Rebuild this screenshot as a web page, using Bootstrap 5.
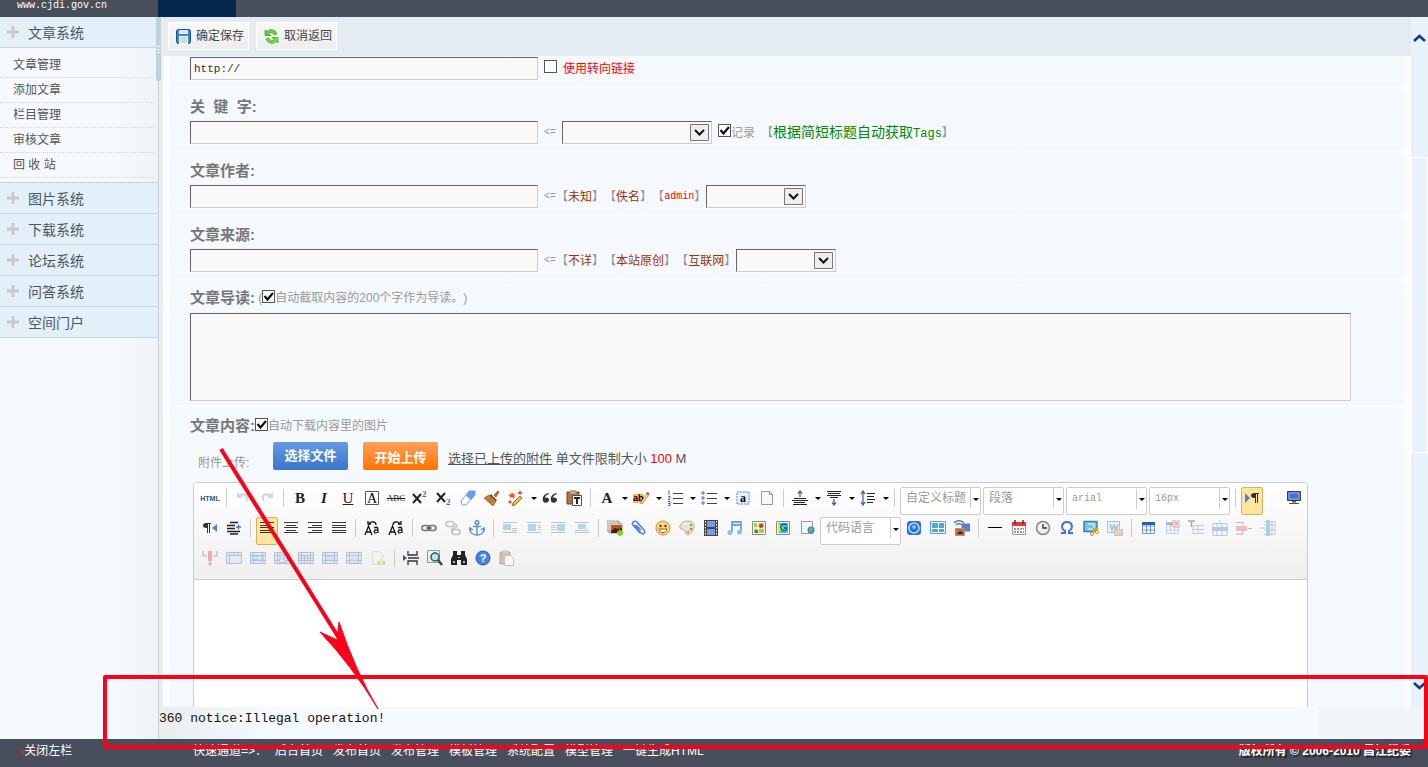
<!DOCTYPE html>
<html lang="zh-CN">
<head>
<meta charset="utf-8">
<meta name="viewport" content="width=device-width, initial-scale=1">
<title>文章系统</title>
<link href="https://cdn.jsdelivr.net/npm/bootstrap@5.3.0/dist/css/bootstrap.min.css" rel="stylesheet">
<style>
body{font-family:"Liberation Sans","Noto Sans CJK SC",sans-serif;font-size:12px;line-height:18px;color:#555;background:#f4f8fd;text-spacing-trim:space-all}
a{color:inherit;text-decoration:none}
.mono{font-family:"Liberation Mono","Noto Sans CJK SC",monospace;font-size:10px}
.topbar{height:17px;background:#484e5c;color:#fff}
.site-name{width:158px;padding-left:17px;line-height:12px}
.top-tab{width:78px;background:#04284d}
.side{width:159px;background:linear-gradient(90deg,#f5f9fe 75%,#edf3f6);border-right:1px solid #c8d2d8}
.side-head{height:31px;padding:2px 0 0 7px;gap:9px;background:#e3f0fa;border-bottom:1px solid #c8d5dc;font-size:14px;color:#49565f}
.side-head svg{margin-bottom:2px}
.side-list{padding:5px 4px 4px 0;border-bottom:1px solid #c8d5dc}
.side-list a{height:25px;line-height:25px;padding-left:13px;border-bottom:1px dotted #ccd5da}
.split-thumb{left:156px;top:0;width:5px;height:64px;background:#bdd3d8;border-radius:2px}
.gutter{border-left:4px solid #e9eeef;background:#fcfdfe}
.actions{height:39px;padding:5px 5px 0;gap:7px;background:#e4ecf2}
.act{width:81px;height:28px;padding:0 4px 0 0;gap:5px;border:1px solid #fff;border-radius:0;background:linear-gradient(#f8f8f8,#ededed);font-size:12px;color:#444}
.form-area{padding:0 7px}
.block{background:linear-gradient(#f4f9fc,#f5f8fe);padding:6px 20px 7px;margin-bottom:2px;color:#999}
.block.first{padding-top:1px}
.cap{font-size:15px;font-weight:700;line-height:24px;color:#777}
.cap-row{height:22px;margin-bottom:4px}
.box{border:1px solid #ccc;border-top-color:#666;border-left-color:#666;background:#f9f9f9;border-radius:0;outline:0}
input.box{width:348px;height:23px;padding:0 3px;font:11px "Liberation Mono",monospace;color:#333}
textarea.box{display:block;width:calc(100% - 33px);height:88px;resize:none}
select.box{width:100px;height:23px;appearance:none;background:#f9f9f9 url("data:image/svg+xml,%3Csvg xmlns='http://www.w3.org/2000/svg' width='19' height='17'%3E%3Cpath d='M.5 .5h18v16H.5z' fill='%23eee' stroke='%23777'/%3E%3Cpath d='M5 6l4.500 4.500L14 6' fill='none' stroke='%23111' stroke-width='2'/%3E%3C/svg%3E") no-repeat right 2px center}
select.wide{width:150px;margin-left:6px}
.tick{appearance:none;width:13px;height:13px;margin:0 0 4px;border:1px solid #555;background:#fff}
.tick:checked{background:#fff url("data:image/svg+xml,%3Csvg xmlns='http://www.w3.org/2000/svg' width='11' height='11'%3E%3Cpath d='M1.500 5l3 3.500L10 2' fill='none' stroke='%23111' stroke-width='2.200'/%3E%3C/svg%3E") center no-repeat}
.gap-s{margin-left:6px}
.gap-e{margin-right:6px}
.red{color:#f00}
.brown{color:#930}
.green{font-size:14px;color:#080}
.green .mono{font-size:12px}
.upload{height:28px;margin:7px 0 12px}
.up-btn{width:75px;height:28px;padding:0;border:0;border-radius:2px;color:#fff;font-size:13px;font-weight:700;line-height:28px;flex:none}
.up-blue{margin-right:15px;background:linear-gradient(#6699e0,#3b76cc)}
.up-orange{margin-right:10px;background:linear-gradient(#ffa05c,#ff7200);line-height:32px}
.up-label{width:83px;padding:12px 0 0 8px;flex:none}
.up-text{font-size:13px;color:#555;padding-top:8px}
.editor{margin:0 76px 0 3px;border:1px solid #ccc;border-radius:4px 4px 0 0;background:#fff}
.tools{padding:4px 0 2px 5px;border-bottom:1px solid #ccc;border-radius:4px 4px 0 0;background:linear-gradient(#fff,#efefef)}
.tool-row{height:30px}
.tb{width:22px;height:22px;padding:0;margin-right:2px;border:0;background:none;flex:none;display:flex;align-items:center;justify-content:center;font-family:"Liberation Serif",serif;font-size:15px;line-height:22px;color:#222}
.tb svg{width:16px;height:16px}
.tb.on{height:28px;padding-bottom:6px;background:#ffe69f;border:1px solid #dcac6c;border-radius:2px}
.tb.off{opacity:.4}
.drop{width:10px;height:22px;flex:none;padding:0;border:0;background:none;display:flex;align-items:center;justify-content:center}
.drop::after,.pick::after{content:"";border:3px solid transparent;border-top-color:#000;border-bottom:0}
.sep{width:9px;height:18px;margin-top:2px;flex:none;background:linear-gradient(#ccc,#ccc) 3px 0/1px 100% no-repeat}
.pick{position:relative;width:81px;height:28px;margin-right:2px;border:1px solid #ccc;border-radius:2px;background:#fff;flex:none}
.pick::after{position:absolute;right:1px;top:10px}
.pick select{width:100%;height:20px;padding:0 5px;border:0;appearance:none;color:#999;font-size:12px;background:linear-gradient(#ccc,#ccc) right 9px top/1px 100% no-repeat}
.pick select.mono{font-size:10px}
.html-tag{font:bold 7px "Liberation Sans",sans-serif;color:#235b83}
.abc{font-size:9px;text-decoration:line-through}
.page{height:200px}
.scroller{width:17px;background:#e9f1fb}
.scroller svg{margin:16px 2px}
.up-gap{height:99px}
.thumb{height:296px;border:1px solid #fff}
.notice{height:32px;background:linear-gradient(90deg,#e9eded,#f4fafd 110px);color:#111;font-size:13px;line-height:24px}
.notice-text{font-family:"Liberation Mono",monospace;font-size:13px}
.notice-end{width:110px;background:#f2f5fa}
.foot{height:28px;padding:0 17px 4px 19px;background:#484e5c;color:#fff}
.foot-left{width:174px}
.foot-mark{font-size:9px;color:#f02030}
.foot-nav{gap:10px}
.foot-title{width:72px}
.copy{font-weight:700;text-shadow:2px 2px 1px #222}
.frame-mark{left:103px;right:0;bottom:18px;height:74px;border:4px solid #f9031a;border-radius:2px;pointer-events:none}
.arrow-mark{left:215px;top:445px;width:170px;height:270px;pointer-events:none}
</style>
<script src="https://cdn.jsdelivr.net/npm/bootstrap@5.3.0/dist/js/bootstrap.bundle.min.js"></script>
</head>
<body class="vh-100 d-flex flex-column overflow-hidden position-relative">
<svg class="d-none" aria-hidden="true">
<symbol id="plus" viewBox="0 0 13 13"><path d="M5 0h3v5h5v3H8v5H5V8H0V5h5z" fill="#c8c8c8"/></symbol>
<symbol id="grid" viewBox="0 0 16 16"><path d="M2.500 2.500h12v11h-12zM2.500 6h12M2.500 10h12M6.500 2.500v11M10.500 2.500v11" fill="#f4f8fd" stroke="#7a9bc8"/><path d="M2 2h13v3H2z" fill="#2e5fae"/></symbol>
<symbol id="cells" viewBox="0 0 16 16"><path d="M.5 2.500h15v11H.5zM0 5.500h16M0 10.500h16M3.500 2v12M12.500 2v12" fill="#cfe0f8" stroke="#5577a8"/></symbol>
</svg>
<header class="topbar d-flex flex-shrink-0"><div class="site-name mono">www.cjdi.gov.cn</div><div class="top-tab"></div></header>

<div class="d-flex flex-grow-1 position-relative overflow-hidden">
<nav class="side flex-shrink-0">
<a href="#" class="side-head d-flex align-items-center"><svg width="12" height="12"><use href="#plus"/></svg>文章系统</a>
<div class="side-list d-flex flex-column"><a href="#">文章管理</a><a href="#">添加文章</a><a href="#">栏目管理</a><a href="#">审核文章</a><a href="#">回 收 站</a></div>
<a href="#" class="side-head d-flex align-items-center"><svg width="12" height="12"><use href="#plus"/></svg>图片系统</a>
<a href="#" class="side-head d-flex align-items-center"><svg width="12" height="12"><use href="#plus"/></svg>下载系统</a>
<a href="#" class="side-head d-flex align-items-center"><svg width="12" height="12"><use href="#plus"/></svg>论坛系统</a>
<a href="#" class="side-head d-flex align-items-center"><svg width="12" height="12"><use href="#plus"/></svg>问答系统</a>
<a href="#" class="side-head d-flex align-items-center"><svg width="12" height="12"><use href="#plus"/></svg>空间门户</a>
</nav>
<div class="split-thumb position-absolute d-flex align-items-center"><svg width="5" height="9" viewBox="0 0 5 9"><path d="M1 1.500h3M1 4.500h3M1 7.500h3" stroke="#fff"/></svg></div>

<div class="d-flex flex-column flex-grow-1 overflow-hidden">
<div class="d-flex flex-grow-1 overflow-hidden">
<main class="gutter flex-grow-1 overflow-hidden">
<div class="actions d-flex">
<button class="act d-flex align-items-center justify-content-end" type="button"><svg width="15" height="15" viewBox="0 0 15 15"><rect x=".5" y=".5" width="14" height="14" rx="2" fill="#3c86cf" stroke="#1d4c86"/><path d="M3 1h9v4H3z" fill="#d9eefc"/><path d="M3 7h9v8H3z" fill="#fff"/><path d="M4 9h7M4 11h7M4 13h7" stroke="#93b9dd"/></svg>确定保存</button>
<button class="act d-flex align-items-center justify-content-end" type="button"><svg width="15" height="15" viewBox="0 0 15 15"><path d="M1 1l2 1.500C6-.5 11 0 13 5l-3 1C9 3 6 3 5 4.500L7 6.500H1z" fill="#67cf35" stroke="#339b2b" stroke-width=".7"/><path d="M14 14l-2-1.500C9 15.500 4 15 2 10l3-1c1 3 4 3 5 1.500L8 8.500h6z" fill="#7bdc4a" stroke="#339b2b" stroke-width=".7"/></svg>取消返回</button>
</div>
<form class="form-area">
<div class="block first d-flex align-items-center"><input class="box" id="link" value="http://" aria-label="转向链接"><input type="checkbox" class="tick gap-s" id="useLink"><label for="useLink" class="red gap-s">使用转向链接</label></div>

<div class="block"><div class="cap-row"><label class="cap" for="kw">关 &nbsp;键 &nbsp;字:</label></div>
<div class="d-flex align-items-center"><input class="box" id="kw"><span class="mono gap-s">&lt;=</span><select class="box wide" aria-label="关键字"><option></option></select><input type="checkbox" class="tick gap-s" id="rec" checked><label for="rec" class="gap-e">记录</label>【<a href="#" class="green">根据简短标题自动获取<span class="mono">Tags</span></a>】</div></div>

<div class="block"><div class="cap-row"><label class="cap" for="author">文章作者:</label></div>
<div class="d-flex align-items-center"><input class="box" id="author"><span class="mono gap-s">&lt;=</span><span>【</span><a href="#" class="brown">未知</a><span>】</span><span>【</span><a href="#" class="brown">佚名</a><span>】</span><span>【</span><a href="#" class="mono red">admin</a><span>】</span><select class="box" aria-label="作者"><option></option></select></div></div>

<div class="block"><div class="cap-row"><label class="cap" for="src">文章来源:</label></div>
<div class="d-flex align-items-center"><input class="box" id="src"><span class="mono gap-s">&lt;=</span><span>【</span><a href="#" class="brown">不详</a><span>】</span><span>【</span><a href="#" class="brown">本站原创</a><span>】</span><span>【</span><a href="#" class="brown">互联网</a><span>】</span><select class="box" aria-label="来源"><option></option></select></div></div>

<div class="block pb-1"><div class="cap-row d-flex align-items-center"><label class="cap" for="intro">文章导读:</label><span>&nbsp;(</span><input type="checkbox" class="tick" id="cut" checked><label for="cut">自动截取内容的200个字作为导读。)</label></div>
<textarea class="box" id="intro"></textarea></div>

<div class="block"><div class="cap-row d-flex align-items-center pt-1"><span class="cap">文章内容:</span><input type="checkbox" class="tick" id="dl" checked><label for="dl">自动下载内容里的图片</label></div>
<div class="upload d-flex"><span class="up-label">附件上传:</span><button type="button" class="up-btn up-blue">选择文件</button><button type="button" class="up-btn up-orange">开始上传</button><div class="up-text"><a href="#" class="text-decoration-underline">选择已上传的附件</a> 单文件限制大小 <span class="red">100</span> M</div></div>

<div class="editor">
<div class="tools">
<div class="tool-row d-flex">
<button type="button" class="tb"><span class="html-tag">HTML</span></button><span class="sep"></span>
<button type="button" class="tb off" title="撤销"><svg viewBox="0 0 16 16"><path d="M2 2v6h6L6 6c4-2 7 1 4 7 6-5 4-12-6-9z" fill="#7aa7dc"/></svg></button>
<button type="button" class="tb off" title="重做"><svg viewBox="0 0 16 16"><path d="M14 2v6H8l2-2c-4-2-7 1-4 7C0 8 2 1 12 4z" fill="#7aa7dc"/></svg></button><span class="sep"></span>
<button type="button" class="tb"><b>B</b></button>
<button type="button" class="tb"><b><i>I</i></b></button>
<button type="button" class="tb"><u>U</u></button>
<button type="button" class="tb" title="字符边框"><svg viewBox="0 0 16 16"><path d="M1.500 1.500h13v13h-13z" fill="none" stroke="#555"/><text x="8" y="13" font-size="14" text-anchor="middle">A</text></svg></button>
<button type="button" class="tb"><span class="abc">ABC</span></button>
<button type="button" class="tb" title="上标"><svg viewBox="0 0 16 16"><path d="M1 4l8 9M9 4l-8 9" stroke="#222" stroke-width="2"/><text x="10" y="7" font-size="9" font-weight="700" fill="#3566c8">2</text></svg></button>
<button type="button" class="tb" title="下标"><svg viewBox="0 0 16 16"><path d="M1 3l8 9M9 3l-8 9" stroke="#222" stroke-width="2"/><text x="10" y="15" font-size="9" font-weight="700" fill="#3566c8">2</text></svg></button>
<button type="button" class="tb" title="清除格式"><svg viewBox="0 0 16 16"><path d="M1 11L9 1h6v4l-9 10H2z" fill="#fff" stroke="#7c9cc6"/><path d="M6 6l3-5h6v4l-4 5z" fill="#6b9ee5"/></svg></button>
<button type="button" class="tb" title="格式刷"><svg viewBox="0 0 16 16"><path d="M10 5l4-4 1 1-3 5z" fill="#b86e2a" stroke="#6d3a0d" stroke-width=".6"/><path d="M7 4l6 6-2 2-6-6z" fill="#8a4e1e"/><path d="M5 5l7 6-3 5-9-8z" fill="#c98740" stroke="#8a4e1e" stroke-width=".7"/><path d="M3 8l4 5M5 7l4 5" stroke="#8a4e1e" stroke-width=".6"/></svg></button>
<button type="button" class="tb" title="自动排版"><svg viewBox="0 0 16 16"><path d="M5 13l7-7 2 2-7 7-3 1z" fill="#f2bd4a" stroke="#a66d28"/><path d="M4 2l1 2 2-1-1 2 2 1-2 1v2L4 7 2 8V6L0 5l3-1zM12 0l1 2 2 1-2 1-1 1-1-1-2-1 2-1zM2 10l1 1 1 1-1 1-1 1-1-1-1-1 1-1z" fill="#e25b35"/></svg></button><button type="button" class="drop" aria-label="更多"></button>
<button type="button" class="tb" title="引用"><svg viewBox="0 0 16 16"><path d="M6.500 3C2 4 0 7 1 11c1 3 6 2 6-1 0-2-2-3-4-2 0-2 1-3 4-4zM14.500 3C10 4 8 7 9 11c1 3 6 2 6-1 0-2-2-3-4-2 0-2 1-3 4-4z" fill="#333"/></svg></button>
<button type="button" class="tb" title="纯文本粘贴"><svg viewBox="0 0 16 16"><path d="M1 2h12v12H1z" fill="#b4713c" stroke="#76431b"/><path d="M4 0h6v4H4z" fill="#aaa"/><path d="M6.500 5.500h9v10h-9z" fill="#fff" stroke="#456"/><path d="M8 8h6M11 8v6" stroke="#222" stroke-width="2"/></svg></button><span class="sep"></span>
<button type="button" class="tb"><b>A</b></button><button type="button" class="drop" aria-label="更多"></button>
<button type="button" class="tb" title="背景色"><svg viewBox="0 0 16 16"><path d="M0 4h11v9H0z" fill="#f7b55e"/><text x="0" y="11" font-size="9" font-weight="700" font-family="Liberation Sans">ab</text><path d="M7 13l7-9 2 1-7 9z" fill="#f5d88d" stroke="#a45a2c" stroke-width=".6"/><path d="M13 4l1-2 2 1v2z" fill="#e33"/></svg></button><button type="button" class="drop" aria-label="更多"></button>
<button type="button" class="tb" title="有序列表"><svg viewBox="0 0 16 16"><path d="M6 3.500h10M6 8.500h10M6 13.500h10" stroke="#444"/><path d="M1 1h1v4M1 6.500h2v1.500l-2 1.500h2M1 11.500h2v4H1M1 13.500h2" fill="none" stroke="#3b74d5"/></svg></button><button type="button" class="drop" aria-label="更多"></button>
<button type="button" class="tb" title="无序列表"><svg viewBox="0 0 16 16"><path d="M6 3.500h10M6 8.500h10M6 13.500h10" stroke="#444"/><g fill="#fff" stroke="#3b5fd5"><circle cx="2" cy="3" r="1.200"/><circle cx="2" cy="8" r="1.200"/><circle cx="2" cy="13" r="1.200"/></g></svg></button><button type="button" class="drop" aria-label="更多"></button>
<button type="button" class="tb" title="全选"><svg viewBox="0 0 16 16"><rect x="2" y="2" width="12" height="12" fill="#e8f2fc" stroke="#9cc1ec" stroke-width="2" stroke-dasharray="2 1"/><text x="8" y="12" text-anchor="middle" font-size="12" font-weight="700">a</text></svg></button>
<button type="button" class="tb" title="清空"><svg viewBox="0 0 16 16"><path d="M2.500 1.500h8l3 3v10h-11z" fill="#f8f9fa" stroke="#999"/><path d="M10.500 1.500v3h3" fill="none" stroke="#999"/></svg></button><span class="sep"></span>
<button type="button" class="tb" title="段前距"><svg viewBox="0 0 16 16"><path d="M2 8.500h12M0 10.500h16M2 12.500h11M1 14.500h14" stroke="#222"/><path d="M8 7V2M6 3.500L8 1l2 2.500" fill="none" stroke="#3b65b5" stroke-width="1.300"/></svg></button><button type="button" class="drop" aria-label="更多"></button>
<button type="button" class="tb" title="段后距"><svg viewBox="0 0 16 16"><path d="M1 1.500h14M2 3.500h12M1 5.500h14M4 7.500h8" stroke="#222"/><path d="M8 9v5M6 12.500L8 15l2-2.500" fill="none" stroke="#3b65b5" stroke-width="1.300"/></svg></button><button type="button" class="drop" aria-label="更多"></button>
<button type="button" class="tb" title="行间距"><svg viewBox="0 0 16 16"><path d="M7 3.500h8M7 6.500h7M7 9.500h8M7 12.500h6" stroke="#222"/><path d="M3 1v14M1 4l2-3 2 3M1 12l2 3 2-3" fill="none" stroke="#3b65b5" stroke-width="1.300"/></svg></button><button type="button" class="drop" aria-label="更多"></button><span class="sep"></span>
<div class="pick"><select aria-label="标题"><option>自定义标题</option></select></div>
<div class="pick"><select aria-label="段落"><option>段落</option></select></div>
<div class="pick"><select class="mono" aria-label="字体"><option>arial</option></select></div>
<div class="pick"><select class="mono" aria-label="字号"><option>16px</option></select></div>
<span class="sep"></span>
<button type="button" class="tb on me-3" title="从左向右"><svg viewBox="0 0 16 16"><path d="M1 3l5 5-5 5z" fill="#4f80db"/><path d="M10 8C6 8 6 3 10 3h5v1h-1v9h-1V4h-1v9h-1V8z" fill="#333"/></svg></button>
<button type="button" class="tb ms-1" title="全屏"><svg viewBox="0 0 16 16"><path d="M1.500 1.500h13v9h-13z" fill="#4970cf" stroke="#3c4150"/><path d="M3 3h10v6H3z" fill="#4970cf" stroke="#c9d8fa" stroke-width=".6"/><path d="M6 11h4v1.500H6zM3 13h10v1H3z" fill="#555"/></svg></button>
</div>
<div class="tool-row d-flex">
<button type="button" class="tb" title="从右向左"><svg viewBox="0 0 16 16"><path d="M15 4v8l-5-4z" fill="#4f80db"/><path d="M4 8C0 8 0 3 4 3h5v1H8v9H7V4H6v9H5V8z" fill="#333"/></svg></button>
<button type="button" class="tb" title="首行缩进"><svg viewBox="0 0 16 16"><path d="M4 2.500h8M1 5.500h8M1 8.500h8M1 11.500h13M4 14h8" stroke="#222" stroke-width="1.500"/><path d="M10 7h5M12.500 4.500v5" stroke="#4878d8" stroke-width="1.500"/></svg></button><span class="sep"></span>
<button type="button" class="tb on" title="居左"><svg viewBox="0 0 16 16"><path d="M1 2.500h14M1 5.500h10M1 7.500h14M1 10.500h10M1 12.500h14" stroke="#333"/></svg></button>
<button type="button" class="tb" title="居中"><svg viewBox="0 0 16 16"><path d="M1 2.500h14M3 5.500h10M1 7.500h14M3 10.500h10M1 12.500h14" stroke="#333"/></svg></button>
<button type="button" class="tb" title="居右"><svg viewBox="0 0 16 16"><path d="M1 2.500h14M5 5.500h10M1 7.500h14M5 10.500h10M1 12.500h14" stroke="#333"/></svg></button>
<button type="button" class="tb" title="两端对齐"><svg viewBox="0 0 16 16"><path d="M1 2.500h14M1 5.500h14M1 7.500h14M1 10.500h14M1 12.500h14" stroke="#333"/></svg></button><span class="sep"></span>
<button type="button" class="tb" title="大写"><svg viewBox="0 0 16 16"><path d="M1 15l3.500-9L8 15M2 12h5M10 8c4-2 4 0 4 5M14 10c-5-1-5 4-1 2.500" fill="none" stroke="#111" stroke-width="1.300"/><path d="M12 5c0-4-6-4-7-1M4 1v3h3" fill="none" stroke="#111" stroke-width="1.300"/></svg></button>
<button type="button" class="tb" title="小写"><svg viewBox="0 0 16 16"><path d="M1 15l3.500-9L8 15M2 12h5M10 8c4-2 4 0 4 5M14 10c-5-1-5 4-1 2.500" fill="none" stroke="#111" stroke-width="1.300"/><path d="M5 5c0-4 6-4 7-1M13 1v3h-3" fill="none" stroke="#111" stroke-width="1.300"/></svg></button><span class="sep"></span>
<button type="button" class="tb" title="超链接"><svg viewBox="0 0 16 16"><g fill="none" stroke="#777" stroke-width="1.600"><rect x="1" y="5.500" width="8" height="5" rx="2.500"/><rect x="7" y="5.500" width="8" height="5" rx="2.500"/></g><path d="M5 8h6" stroke="#444"/></svg></button>
<button type="button" class="tb off" title="取消链接"><svg viewBox="0 0 16 16"><g fill="none" stroke="#777" stroke-width="1.600"><rect x="1" y="1.500" width="8" height="5" rx="2.500"/><rect x="7" y="9.500" width="8" height="5" rx="2.500"/><path d="M9 4c4 0 3 4 0 4s-3 3-1 4"/></g></svg></button>
<button type="button" class="tb" title="锚点"><svg viewBox="0 0 16 16"><g fill="none" stroke="#5d93c9" stroke-width="1.500"><circle cx="8" cy="2.500" r="1.800"/><path d="M8 4v11M4 6.500h8M1 9c0 8 14 8 14 0M0 11l1-3 3 2M16 11l-1-3-3 2"/></g></svg></button><span class="sep"></span>
<button type="button" class="tb off" title="左浮动"><svg viewBox="0 0 16 16"><path d="M1 2.500h14M10 8.500h5M10 10.500h5M1 12.500h14" stroke="#777"/><path d="M1 4h8v6H1z" fill="#4aa7e0"/></svg></button>
<button type="button" class="tb off" title="右浮动"><svg viewBox="0 0 16 16"><path d="M1 2.500h14M12 5.500h3M12 7.500h3M12 9.500h3M1 12.500h14" stroke="#777"/><path d="M2 4h8v7H2z" fill="#4aa7e0"/></svg></button>
<button type="button" class="tb off" title="默认"><svg viewBox="0 0 16 16"><path d="M1 2.500h14M1 5.500h5M1 7.500h5M1 9.500h5M1 12.500h14" stroke="#777"/><path d="M7 4h8v7H7z" fill="#4aa7e0"/></svg></button>
<button type="button" class="tb off" title="居中图片"><svg viewBox="0 0 16 16"><path d="M1 2.500h14M1 12.500h14M1 10.500h14" stroke="#777"/><path d="M4 4h8v5H4z" fill="#4aa7e0"/></svg></button><span class="sep"></span>
<button type="button" class="tb" title="图片"><svg viewBox="0 0 16 16"><path d="M0 1h12v10H0zM2 3h12v10H2z" fill="#eee" stroke="#888" stroke-width=".8"/><path d="M3.500 4.500h12v9h-12z" fill="#c75117" stroke="#ccc"/><path d="M4 11l4-3 3 1 4-1v5H4z" fill="#4b1d08"/><path d="M13 10v6M10 13h6" stroke="#7fd12c" stroke-width="3"/></svg></button>
<button type="button" class="tb" title="附件"><svg viewBox="0 0 16 16"><path d="M3 5l7 8c2 2 5 0 3-3L6 2C3 0 0 3 2 5l7 8M5 5l5 5" fill="none" stroke="#4d7fd9" stroke-width="1.500"/></svg></button>
<button type="button" class="tb" title="表情"><svg viewBox="0 0 16 16"><circle cx="8" cy="8" r="7" fill="#ffd98a" stroke="#d78a24"/><circle cx="5.500" cy="6" r="1.200" fill="#623500"/><circle cx="10.500" cy="6" r="1.200" fill="#623500"/><path d="M4 9h8c-1 5-7 5-8 0z" fill="#fff" stroke="#995100"/></svg></button>
<button type="button" class="tb" title="涂鸦"><svg viewBox="0 0 16 16"><path d="M9 1C2 1-1 7 2 9c3 1 4 0 4 3 1 5 6 3 8-2 3-6-1-9-5-9z" fill="#e9e3d7" stroke="#b9ad95"/><circle cx="6" cy="4" r="1.300" fill="#fff"/><circle cx="12" cy="5" r="1.300" fill="#83b45b"/><circle cx="12" cy="9" r="1.200" fill="#d56b4e"/><circle cx="9" cy="12" r="1.300" fill="#c89c40"/></svg></button>
<button type="button" class="tb" title="视频"><svg viewBox="0 0 16 16"><path d="M1 0h14v16H1z" fill="#444"/><path d="M4 1h8v6H4zM4 9h8v6H4z" fill="#799ae8"/><path d="M2.500 1v15M13.500 1v15" stroke="#fff" stroke-dasharray="1.500 1.500"/></svg></button>
<button type="button" class="tb" title="音乐"><svg viewBox="0 0 16 16"><path d="M5 12V2h9v9M5 5h9" fill="none" stroke="#69a5d6" stroke-width="1.800"/><circle cx="3" cy="12.500" r="2.500" fill="#8fc4ea"/><circle cx="12.500" cy="12" r="2.500" fill="#8fc4ea"/></svg></button>
<button type="button" class="tb" title="地图"><svg viewBox="0 0 16 16"><path d="M1.500 1.500h13v13h-13z" fill="#fff" stroke="#888"/><path d="M3 3h10v10H3z" fill="#9ccd61"/><path d="M3 8h10M7 3v10" stroke="#f5ee9a" stroke-width="2"/><circle cx="10" cy="6" r="2" fill="#e22"/><path d="M4 10h3v3H4z" fill="#3777b5"/></svg></button>
<button type="button" class="tb" title="Google地图"><svg viewBox="0 0 16 16"><path d="M1.500 1.500h13v13h-13z" fill="#fff" stroke="#888"/><path d="M3 3h10v10H3z" fill="#13d6f3"/><path d="M3 3l5 5-5 5z" fill="#ffdf1b"/><path d="M12 5C7 2 4 7 7 10c3 2 5 0 5-2H9" fill="none" stroke="#185d85" stroke-width="1.300"/></svg></button>
<button type="button" class="tb" title="网页"><svg viewBox="0 0 16 16"><path d="M2.500 1.500h11v12h-11z" fill="#f4f7fa" stroke="#99a"/><circle cx="12" cy="10" r="3.500" fill="#3b84c8"/><path d="M11 7l3 2-2 4-2-2z" fill="#73ba68"/></svg></button>
<div class="pick"><select aria-label="代码语言"><option>代码语言</option></select></div>
<button type="button" class="tb" title="应用"><svg viewBox="0 0 16 16"><rect x="1" y="1" width="14" height="14" rx="3" fill="#2d73c7"/><circle cx="8" cy="8" r="5" fill="none" stroke="#bfe2ff" stroke-width="1.500"/><circle cx="8" cy="7" r="2" fill="#79c2f5"/></svg></button>
<button type="button" class="tb" title="模板"><svg viewBox="0 0 16 16"><path d="M.5 1.500h15v12H.5z" fill="#fff" stroke="#6b9bc4"/><path d="M2 3h6v5H2zM9 3h5v5H9zM2 9h6v3H2zM9 9h5v3H9z" fill="#4fa8dc"/></svg></button>
<button type="button" class="tb" title="远程图片"><svg viewBox="0 0 16 16"><path d="M0 3c3-3 7-3 10 0M2 5c2-2 4-2 6 0" fill="none" stroke="#4477b8" stroke-width="1.500"/><path d="M8 4h8v7H8z" fill="#547fd5" stroke="#778"/><path d="M1.500 8.500h9v7h-9z" fill="#d06b27" stroke="#999"/><path d="M3 14l3-3 3 2v1H3z" fill="#4b1d08"/></svg></button><span class="sep"></span>
<button type="button" class="tb" title="分隔线"><svg viewBox="0 0 16 16"><path d="M1 7.500h14" stroke="#000"/></svg></button>
<button type="button" class="tb" title="日期"><svg viewBox="0 0 16 16"><path d="M1.500 3.500h13v11h-13z" fill="#fff" stroke="#999"/><path d="M1 2h14v4H1z" fill="#e23b38"/><path d="M4 0v4M12 0v4" stroke="#a11" stroke-width="1.500"/><path d="M3 9h10M3 12h10" stroke="#999" stroke-width="2" stroke-dasharray="2 1"/></svg></button>
<button type="button" class="tb" title="时间"><svg viewBox="0 0 16 16"><circle cx="8" cy="8" r="6.500" fill="#eee" stroke="#888" stroke-width="1.500"/><path d="M8 4v4h4" fill="none" stroke="#333" stroke-width="1.300"/></svg></button>
<button type="button" class="tb" title="特殊字符"><svg viewBox="0 0 16 16"><path d="M2 13h4v-2C1 8 3 2 8 2s7 6 2 9v2h4" fill="none" stroke="#3f73cf" stroke-width="2"/></svg></button>
<button type="button" class="tb" title="截图"><svg viewBox="0 0 16 16"><path d="M1 1.500h13v10H1z" fill="#74c4e8" stroke="#3c81ad" stroke-width="1.500"/><path d="M5 4h6v5H5M3 14h7" fill="none" stroke="#eff"/><path d="M8 14l6-6M10 8l5 5" stroke="#d5a12d" stroke-width="2"/><circle cx="9" cy="14" r="1.500" fill="#fff" stroke="#c69525"/><circle cx="14" cy="12" r="1.500" fill="#fff" stroke="#c69525"/></svg></button>
<button type="button" class="tb off" title="Word图片"><svg viewBox="0 0 16 16"><path d="M.5 1.500h12v11H.5z" fill="#dcecff" stroke="#3474b7"/><path d="M3 4l2 6 2-5 2 5 2-6" fill="none" stroke="#2563a8" stroke-width="1.500"/><path d="M7.500 9.500h8v6h-8z" fill="#ea9652" stroke="#777"/></svg></button><span class="sep"></span>
<button type="button" class="tb" title="表格"><svg><use href="#grid"/></svg></button>
<button type="button" class="tb off" title="删除表格"><svg viewBox="0 0 16 16"><use href="#grid"/><path d="M9 0h7v7H9z" fill="#fff" stroke="#d22"/><path d="M10.500 1.500l4 4M14.500 1.500l-4 4" stroke="#d22" stroke-width="1.500"/></svg></button>
<button type="button" class="tb off" title="表格前插入"><svg viewBox="0 0 16 16"><path d="M0 1h7M3.500 1v6" stroke="#333" stroke-width="1.500"/><path d="M5 5.500h11M5 9.500h11M5 13.500h11M5 5v9M10 5v9" stroke="#5b82b8"/></svg></button>
<button type="button" class="tb off" title="插入行"><svg viewBox="0 0 16 16"><path d="M1 3.500h14v12H1zM5 3v12M10 3v12M8 0v5" fill="none" stroke="#5b82b8"/><path d="M0 7h16v4H0z" fill="#3e91d6"/></svg></button>
<button type="button" class="tb off" title="删除行"><svg viewBox="0 0 16 16"><path d="M0 2.500h7v3M0 14h7v-3M12 8.500h4" fill="none" stroke="#555"/><path d="M0 6h11v5H0z" fill="#e66"/></svg></button>
<button type="button" class="tb off" title="插入列"><svg viewBox="0 0 16 16"><path d="M4 1.500h11v13H4M4 5h11M4 10h11M0 8h5M12 1v14" fill="none" stroke="#5b82b8"/><path d="M6 0h4v16H6z" fill="#3e91d6"/></svg></button>
</div>
<div class="tool-row d-flex">
<button type="button" class="tb off" title="删除列"><svg viewBox="0 0 16 16"><path d="M1 1v5h4M15 1v5h-4M8 10v6M6 13l2 2 2-2" fill="none" stroke="#555"/><path d="M6 1h4v10H6z" fill="#e44"/></svg></button>
<button type="button" class="tb off" title="合并单元格"><svg viewBox="0 0 16 16"><path d="M.5 2.500h15v11H.5z" fill="#cfe0f8" stroke="#5577a8"/><path d="M1 5.500h15M4 2v3M8 2v3M12 2v3M3.500 5v8" stroke="#5577a8"/></svg></button>
<button type="button" class="tb off" title="右合并"><svg viewBox="0 0 16 16"><use href="#cells"/><path d="M2 6h12v4H2z" fill="#5aa4e6"/><path d="M4 8h7M9 6l2 2-2 2" fill="none" stroke="#fff"/></svg></button>
<button type="button" class="tb off" title="下合并"><svg viewBox="0 0 16 16"><use href="#cells"/><path d="M5 4h6v9H5z" fill="#5aa4e6"/><path d="M8 5v7M6 10l2 2 2-2" fill="none" stroke="#fff"/></svg></button>
<button type="button" class="tb off" title="拆分单元格"><svg viewBox="0 0 16 16"><use href="#cells"/><path d="M0 8h16M6.500 5v8M9.500 5v8" stroke="#5577a8"/></svg></button>
<button type="button" class="tb off" title="拆分行"><svg viewBox="0 0 16 16"><use href="#cells"/><path d="M4 6h8v2H4zM4 9h8v1H4z" fill="#8fc0ee"/></svg></button>
<button type="button" class="tb off" title="拆分列"><svg viewBox="0 0 16 16"><use href="#cells"/><path d="M5 4h2v9H5zM9 4h2v9H9z" fill="#8fc0ee"/></svg></button>
<button type="button" class="tb off" title="图表"><svg viewBox="0 0 16 16"><path d="M2.500 1.500h7l3 3v10h-10z" fill="#f5f5f5" stroke="#bbb"/><path d="M7 11h3v4H7z" fill="#d94"/><path d="M10 9h3v6h-3z" fill="#ed3"/><path d="M13 11h2v4h-2z" fill="#6b4"/></svg></button><span class="sep"></span>
<button type="button" class="tb" title="分页"><svg viewBox="0 0 16 16"><path d="M5 1v4h9V1M5 15v-4h9v4M5 8h11" fill="none" stroke="#333" stroke-width="1.300"/><path d="M0 5l4 3-4 3z" fill="#2458a8"/></svg></button>
<button type="button" class="tb" title="预览"><svg viewBox="0 0 16 16"><path d="M.5 .5h12v12H.5z" fill="#eee" stroke="#999"/><circle cx="8" cy="7" r="4" fill="#b4e4f5" stroke="#356" stroke-width="1.500"/><path d="M11 10l4 5" stroke="#444" stroke-width="2.500"/></svg></button>
<button type="button" class="tb" title="查找替换"><svg viewBox="0 0 16 16"><path d="M2 1h4v4h4V1h4v4l2 4v6h-6v-5H6v5H0V9l2-4z" fill="#222"/><path d="M2 11h2v2H2zM12 11h2v2h-2zM7 7h2v1H7z" fill="#bbb"/></svg></button>
<button type="button" class="tb" title="帮助"><svg viewBox="0 0 16 16"><circle cx="8" cy="8" r="7" fill="#4b80e4" stroke="#2457b5"/><text x="8" y="12" text-anchor="middle" font-size="11" font-weight="700" fill="#fff" font-family="Liberation Sans">?</text></svg></button>
<button type="button" class="tb off" title="粘贴"><svg viewBox="0 0 16 16"><path d="M1 2h10v12H1z" fill="#b4713c" stroke="#76431b"/><path d="M4 0h5v3H4z" fill="#999"/><path d="M5.500 5.500h6l3 3v7h-9z" fill="#fff" stroke="#778"/></svg></button>
</div>
</div>
<div class="page"></div>
</div>
</div>
</form>
</main>
<div class="scroller flex-shrink-0 d-flex flex-column"><svg width="13" height="9" viewBox="0 0 13 9"><path d="M1 8l5.500-5L12 8" fill="none" stroke="#0b3a95" stroke-width="2.500"/></svg>
<div class="up-gap"></div><div class="thumb"></div>
<svg class="mt-auto" width="13" height="9" viewBox="0 0 13 9"><path d="M1 1l5.500 5L12 1" fill="none" stroke="#0b3a95" stroke-width="2.500"/></svg></div>
</div>
<div class="notice d-flex flex-shrink-0 justify-content-between"><samp class="notice-text">360 notice:Illegal operation!</samp><span class="notice-end"></span></div>
</div>
</div>

<footer class="foot d-flex align-items-center flex-shrink-0">
<a href="#" class="foot-left"><span class="foot-mark">×</span>关闭左栏</a>
<nav class="foot-nav d-flex flex-grow-1 text-nowrap"><span class="foot-title">快速通道=&gt;：</span><a href="#">后台首页</a><a href="#">发布首页</a><a href="#">发布管理</a><a href="#">模板管理</a><a href="#">系统配置</a><a href="#">模型管理</a><a href="#">一键生成HTML</a></nav>
<span class="copy">版权所有 © 2006-2010 昌江纪委</span>
</footer>
<div class="frame-mark position-absolute"></div>
<svg class="arrow-mark position-absolute" viewBox="0 0 170 270"><path d="M6 4L132 206" stroke="#f9031a" stroke-width="4"/><path d="M124 177Q140 225 163 264 138 222 105 187L122 195z" fill="#f9031a" stroke="#f9031a"/></svg>
</body>
</html>
